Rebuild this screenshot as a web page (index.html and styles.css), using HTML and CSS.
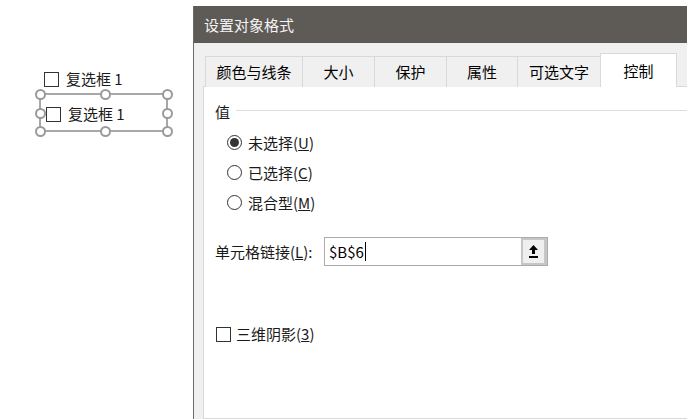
FILE: index.html
```html
<!DOCTYPE html>
<html lang="zh-CN">
<head>
  <meta charset="UTF-8" />
  <title>设置对象格式</title>
  <link rel="stylesheet" href="styles.css">
</head>
<body>

<div class="sheet">
  <div class="shape shape-one">
    <span class="box"></span>
    <span>复选框 1</span>
  </div>

  <div class="selection">
    <span class="handle h-tl"></span>
    <span class="handle h-tm"></span>
    <span class="handle h-tr"></span>
    <span class="handle h-ml"></span>
    <span class="handle h-mr"></span>
    <span class="handle h-bl"></span>
    <span class="handle h-bm"></span>
    <span class="handle h-br"></span>
  </div>

  <div class="shape shape-two">
    <span class="box"></span>
    <span>复选框 1</span>
  </div>
</div>

<div class="dialog">
  <div class="title-bar">设置对象格式</div>

  <div class="dialog-body">
    <div class="tabs">
      <div class="tab tab-1">颜色与线条</div>
      <div class="tab tab-2">大小</div>
      <div class="tab tab-3">保护</div>
      <div class="tab tab-4">属性</div>
      <div class="tab tab-5">可选文字</div>
      <div class="tab tab-6 active">控制</div>
    </div>

    <div class="panel">
      <div class="group-title">
        <span>值</span>
        <span class="group-line"></span>
      </div>

      <div class="radios">
        <div class="radio-row">
          <span class="radio checked"></span>
          <span>未选择(<u>U</u>)</span>
        </div>
        <div class="radio-row">
          <span class="radio"></span>
          <span>已选择(<u>C</u>)</span>
        </div>
        <div class="radio-row">
          <span class="radio"></span>
          <span>混合型(<u>M</u>)</span>
        </div>
      </div>

      <div class="link-row">
        <label class="link-label">单元格链接(<u>L</u>):</label>
        <div class="ref-input">
          <span class="ref-text">$B$6</span><span class="caret"></span>
          <span class="ref-btn">
            <svg width="9" height="13" viewBox="0 0 9 13">
              <path d="M4.5 0 L9 5 L6 5 L6 9 L3 9 L3 5 L0 5 Z" fill="#000"/>
              <rect x="0" y="11" width="9" height="2" fill="#000"/>
            </svg>
          </span>
        </div>
      </div>

      <div class="check-row">
        <span class="box"></span>
        <span>三维阴影(<u>3</u>)</span>
      </div>
    </div>
  </div>
</div>

</body>
</html>
```

FILE: styles.css
```css
body {
  margin: 0;
  padding: 0;
  height: 419px;
  overflow: hidden;
  display: flex;
  background: #fff;
  font-family: "Microsoft YaHei", "Noto Sans CJK SC", "Liberation Sans", sans-serif;
  font-size: 15px;
  color: #1a1a1a;
}

/* left: worksheet with the checkbox shapes */
.sheet {
  position: relative;
  width: 193px;
  flex-shrink: 0;
}

.shape {
  position: absolute;
  display: flex;
  align-items: center;
  gap: 7px;
  line-height: 20px;
}

.shape-one {
  left: 44px;
  top: 69px;
}

.shape-two {
  left: 46px;
  top: 104px;
}

.box {
  display: inline-block;
  width: 15px;
  height: 15px;
  box-sizing: border-box;
  border: 1px solid #333;
  background: #fff;
}

.selection {
  position: absolute;
  left: 39px;
  top: 93px;
  width: 129px;
  height: 39px;
  box-sizing: border-box;
  border: 2px solid #a8a8a8;
}

.handle {
  position: absolute;
  width: 11px;
  height: 11px;
  box-sizing: border-box;
  border: 2px solid #9a9a9a;
  border-radius: 50%;
  background: #fff;
  z-index: 2;
}

.h-tl { left: -6.5px; top: -6.5px; }
.h-tm { left: 58.5px; top: -6.5px; }
.h-tr { right: -6.5px; top: -6.5px; }
.h-ml { left: -6.5px; top: 12.5px; }
.h-mr { right: -6.5px; top: 12.5px; }
.h-bl { left: -6.5px; bottom: -6.5px; }
.h-bm { left: 58.5px; bottom: -6.5px; }
.h-br { right: -6.5px; bottom: -6.5px; }

/* right: the dialog */
.dialog {
  width: 520px;
  flex-shrink: 0;
  margin-top: 6px;
  border-left: 1px solid #6b6b6b;
  background: #f0f0f0;
  display: flex;
  flex-direction: column;
}

.title-bar {
  height: 37px;
  line-height: 37px;
  padding-left: 10px;
  background: #5e5a56;
  color: #f4f4f4;
}

.dialog-body {
  flex: 1;
  display: flex;
  flex-direction: column;
  padding: 11px 0 0 9px;
}

.tabs {
  display: flex;
  align-items: flex-end;
  margin-left: 2px;
  height: 33px;
  position: relative;
  z-index: 1;
  margin-bottom: -1px;
}

.tab {
  box-sizing: border-box;
  height: 31px;
  border: 1px solid #d9d9d9;
  border-bottom: none;
  margin-right: -1px;
  background: #f0f0f0;
  color: #000;
  text-align: center;
  line-height: 30px;
}

.tab-1 { width: 98px; }
.tab-2 { width: 73px; }
.tab-3 { width: 73px; }
.tab-4 { width: 72px; }
.tab-5 { width: 84px; }
.tab-6 { width: 77px; }

.tab.active {
  height: 34px;
  line-height: 33px;
  background: #fff;
  position: relative;
  z-index: 2;
}

.panel {
  flex: 1;
  background: #fff;
  border: 1px solid #d9d9d9;
  padding: 15px 0 0 11px;
}

.group-title {
  display: flex;
  align-items: center;
  line-height: 20px;
}

.group-line {
  flex: 1;
  height: 1px;
  background: #dcdcdc;
  margin: 0 0 4px 6px;
}

.radios {
  margin-top: 5px;
  padding-left: 12px;
}

.radio-row {
  display: flex;
  align-items: center;
  gap: 6px;
  height: 30px;
}

.radio {
  width: 15px;
  height: 15px;
  box-sizing: border-box;
  border: 1px solid #333;
  border-radius: 50%;
  display: flex;
  align-items: center;
  justify-content: center;
}

.radio.checked::after {
  content: "";
  width: 9px;
  height: 9px;
  border-radius: 50%;
  background: #333;
}

.link-row {
  display: flex;
  align-items: center;
  margin-top: 20px;
}

.link-label {
  width: 109px;
}

.ref-input {
  box-sizing: border-box;
  width: 224px;
  height: 29px;
  border: 1px solid #ababab;
  display: flex;
  align-items: center;
  padding-left: 4px;
}

.ref-text {
  color: #000;
}

.caret {
  width: 1px;
  height: 19px;
  background: #000;
  margin-left: 1px;
}

.ref-btn {
  margin-left: auto;
  box-sizing: border-box;
  width: 26px;
  height: 27px;
  border: 2px solid #c6c6c6;
  border-right-width: 3px;
  background: #efefef;
  display: flex;
  align-items: center;
  justify-content: center;
}

.check-row {
  display: flex;
  align-items: center;
  gap: 5px;
  margin-top: 58px;
  padding-left: 1px;
  line-height: 20px;
}
```
